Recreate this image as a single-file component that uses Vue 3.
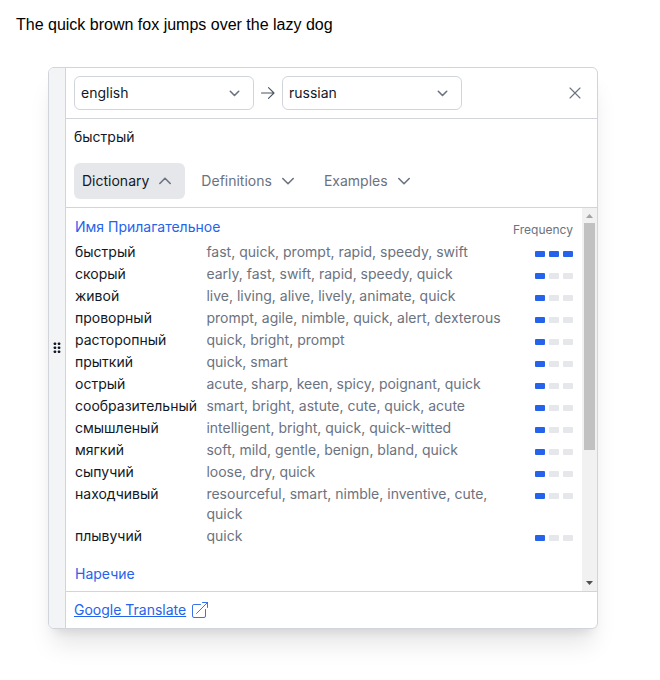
<script setup>
const rows = [
  { word: 'быстрый', terms: 'fast, quick, prompt, rapid, speedy, swift', level: 3 },
  { word: 'скорый', terms: 'early, fast, swift, rapid, speedy, quick', level: 1 },
  { word: 'живой', terms: 'live, living, alive, lively, animate, quick', level: 1 },
  { word: 'проворный', terms: 'prompt, agile, nimble, quick, alert, dexterous', level: 1 },
  { word: 'расторопный', terms: 'quick, bright, prompt', level: 1 },
  { word: 'прыткий', terms: 'quick, smart', level: 1 },
  { word: 'острый', terms: 'acute, sharp, keen, spicy, poignant, quick', level: 1 },
  { word: 'сообразительный', terms: 'smart, bright, astute, cute, quick, acute', level: 1 },
  { word: 'смышленый', terms: 'intelligent, bright, quick, quick-witted', level: 1 },
  { word: 'мягкий', terms: 'soft, mild, gentle, benign, bland, quick', level: 1 },
  { word: 'сыпучий', terms: 'loose, dry, quick', level: 1 },
  { word: 'находчивый', terms: 'resourceful, smart, nimble, inventive, cute, quick', level: 1 },
  { word: 'плывучий', terms: 'quick', level: 1 },
]
const tabs = [
  { name: 'Dictionary', open: true },
  { name: 'Definitions', open: false },
  { name: 'Examples', open: false },
]
</script>

<template>
  <main class="page">
    <p class="source">The quick brown fox jumps over the lazy dog</p>
    <section class="panel">
      <div class="handle">
        <svg width="8" height="12" viewBox="0 0 8 12" fill="#111827">
          <template v-for="y in [0.5, 4.5, 8.5]" :key="y">
            <rect x="0.7" :y="y" width="2.5" height="2.5" rx=".7" />
            <rect x="4.8" :y="y" width="2.5" height="2.5" rx=".7" />
          </template>
        </svg>
      </div>
      <div class="body">
        <header class="header">
          <div class="select">
            <span>english</span>
            <svg class="chev" width="12" height="12" viewBox="0 0 12 12"><path d="M1.3 4.3 5.5 8.5 9.7 4.3" /></svg>
          </div>
          <svg class="arrow" width="16" height="16" viewBox="0 0 16 16"><path d="M1.5 8H14M8.5 2.7 14 8 8.5 13.3" /></svg>
          <div class="select">
            <span>russian</span>
            <svg class="chev" width="12" height="12" viewBox="0 0 12 12"><path d="M1.3 4.3 5.5 8.5 9.7 4.3" /></svg>
          </div>
          <svg class="close" width="12" height="12" viewBox="0 0 12 12"><path d="M1 1 11 11M11 1 1 11" /></svg>
        </header>
        <div class="top">
          <div class="result">быстрый</div>
          <nav class="tabs">
            <button v-for="t in tabs" :key="t.name" class="tab" :class="{ active: t.open }">
              <span>{{ t.name }}</span>
              <svg class="tab-chev" width="14" height="14" viewBox="0 0 14 14">
                <path :d="t.open ? 'M1.8 9.5 7 4.3 12.2 9.5' : 'M1.8 4.5 7 9.7 12.2 4.5'" />
              </svg>
            </button>
          </nav>
        </div>
        <div class="scroll">
          <div class="list">
            <div class="list-head">
              <span class="pos">Имя Прилагательное</span>
              <span class="freq">Frequency</span>
            </div>
            <div v-for="r in rows" :key="r.word" class="row">
              <span class="word">{{ r.word }}</span>
              <span class="terms">{{ r.terms }}</span>
              <span class="bars"><i v-for="n in 3" :key="n" :class="{ on: n <= r.level }"></i></span>
            </div>
            <div class="pos next">Наречие</div>
          </div>
          <div class="scrollbar">
            <svg width="15" height="15" viewBox="0 0 15 15" fill="#a3a3a3"><path d="M4 10 7.5 6 11 10Z" /></svg>
            <div class="thumb"></div>
            <svg class="down" width="15" height="15" viewBox="0 0 15 15" fill="#505050"><path d="M4 5H11L7.5 9Z" /></svg>
          </div>
        </div>
        <footer class="footer">
          <a class="link">Google Translate</a>
          <svg class="ext" width="18" height="18" viewBox="0 0 18 18">
            <path d="M9.5 3.5H3Q1.5 3.5 1.5 5V15Q1.5 16.5 3 16.5H13Q14.5 16.5 14.5 15V8.5M5.5 12.5 16.5 1.5M11.5 1.5H16.5V6.5" />
          </svg>
        </footer>
      </div>
    </section>
  </main>
</template>

<style>
body { background: #fff; }
</style>

<style scoped>
* { box-sizing: border-box; }
.page { height: 680px; font: 14px/20px Inter, "Noto Sans", sans-serif; color: #111827; }
.source { margin: 0; padding: 13px 16px 0; height: 67px; font: 16px/24px "Liberation Sans", Arial, sans-serif; color: #000; }
.panel {
  margin-left: 48px; width: 550px; height: 562px; display: flex;
  background: #fff; border: 1px solid #d1d5db; border-radius: 6px;
  box-shadow: 0 20px 25px -5px rgba(0, 0, 0, .1), 0 8px 10px -6px rgba(0, 0, 0, .1);
}
.handle { width: 17px; flex: none; border-radius: 5px 0 0 5px; background: #f3f4f6; border-right: 1px solid #d1d5db; display: flex; align-items: center; justify-content: center; }
.body { flex: 1; min-width: 0; display: flex; flex-direction: column; }
svg path { stroke-linecap: round; stroke-linejoin: round; }
.header { height: 51px; flex: none; display: flex; align-items: center; padding: 0 16px 0 8px; border-bottom: 1px solid #d1d5db; }
.select { width: 180px; height: 34px; display: flex; align-items: center; justify-content: space-between; padding: 0 12px 0 6px; border: 1px solid #d1d5db; border-radius: 6px; }
.chev, .tab-chev { fill: none; stroke: #6b7280; stroke-width: 1.6; }
.arrow { margin: 0 6px; fill: none; stroke: #4b5563; stroke-width: 1.1; }
.close { margin-left: auto; fill: none; stroke: #6b7280; stroke-width: 1.1; }
.top { height: 89px; flex: none; padding: 8px; border-bottom: 1px solid #d1d5db; }
.result { height: 36px; }
.tabs { display: flex; gap: 8px; }
.tab { height: 36px; display: flex; align-items: center; gap: 9px; padding: 0 13px 0 8px; border: 0; border-radius: 6px; background: none; font: inherit; color: #6b7280; }
.tab.active { background: #e5e7eb; color: #111827; }
.scroll { height: 383px; flex: none; display: flex; }
.list { flex: 1; padding: 9px; }
.list-head { display: flex; justify-content: space-between; height: 25px; }
.pos { color: #2563eb; }
.freq { font-size: 12px; line-height: 26px; color: #6b7280; }
.row { display: grid; grid-template-columns: 131.4px 300px 1fr; margin-bottom: 2px; }
.terms { color: #6b7280; }
.bars { display: flex; gap: 4px; justify-content: flex-end; padding-top: 9px; }
.bars i { width: 10px; height: 6px; border-radius: 1px; background: #e5e7eb; }
.bars i.on { background: #2563eb; }
.next { margin-top: 18px; }
.scrollbar { width: 15px; flex: none; display: flex; flex-direction: column; align-items: center; background: #f1f1f1; }
.thumb { width: 11px; height: 227px; background: #c1c1c1; }
.down { margin-top: auto; }
.footer { flex: 1; display: flex; align-items: center; gap: 5px; padding: 0 8px; border-top: 1px solid #d1d5db; }
.link { color: #2563eb; text-decoration: underline; }
.ext { fill: none; stroke: #2563eb; stroke-width: .9; }
</style>
